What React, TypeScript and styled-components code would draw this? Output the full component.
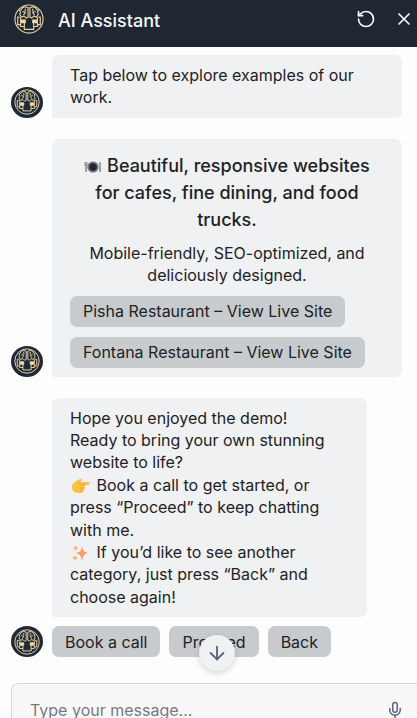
import React from "react";
import styled, { createGlobalStyle } from "styled-components";
import { ArrowDown, Mic, RotateCcw, X } from "lucide-react";

const GlobalStyle = createGlobalStyle`
  *, *::before, *::after { box-sizing: border-box; }
  body {
    margin: 0;
    background: #fdfdfd;
    color: #1e2226;
    font-family: Inter, "Liberation Sans", sans-serif;
    font-size: 16px;
    line-height: 1.4;
  }
  button, input { font: inherit; color: inherit; }
`;

const Chat = styled.main`
  display: flex;
  flex-direction: column;
  height: 100vh;
  overflow: hidden;
`;

const Header = styled.header`
  display: flex;
  align-items: center;
  flex-shrink: 0;
  gap: 14px;
  height: 47px;
  padding: 0 3px 9px 14px;
  background: #1e2732;
  color: #f7f8f9;
`;

const Title = styled.h1`
  flex: 1;
  margin: 0;
  padding-top: 4px;
  font-size: 18px;
  font-weight: 500;
  line-height: 28px;
`;

const HeaderActions = styled.div`
  display: flex;
  gap: 18px;
`;

const IconButton = styled.button`
  display: flex;
  padding: 0;
  border: 0;
  background: none;
  cursor: pointer;
`;

const Messages = styled.section`
  display: flex;
  flex-direction: column;
  flex-shrink: 0;
  gap: 21px;
  padding: 8px 15px 26px 11px;
`;

const Turn = styled.div`
  display: flex;
  flex-direction: column;
  gap: 9px;
`;

const Row = styled.div`
  display: flex;
  align-items: flex-end;
  gap: 9px;
`;

const Avatar = styled.span<{ $hidden?: boolean }>`
  display: flex;
  align-items: center;
  justify-content: center;
  flex: 0 0 32px;
  height: 31px;
  border-radius: 50%;
  background: #1e2a38;
  visibility: ${(p) => (p.$hidden ? "hidden" : "visible")};
`;

const Bubble = styled.div<{ $narrow?: boolean }>`
  flex: 1;
  margin-right: ${(p) => (p.$narrow ? "35px" : "0")};
  padding: 9px 18px;
  border-radius: 7px 7px 7px 2px;
  background: #eff1f3;
`;

const Text = styled.p`
  margin: 0;
`;

const Card = styled.article`
  display: flex;
  flex-direction: column;
  gap: 9px;
  padding-top: 4px;
`;

const CardTitle = styled.h2`
  margin: 0;
  font-size: 18px;
  font-weight: 500;
  line-height: 27px;
  text-align: center;
`;

const CardText = styled.p`
  margin: 0;
  text-align: center;
`;

const Choices = styled.div<{ $stacked?: boolean }>`
  display: flex;
  flex-direction: ${(p) => (p.$stacked ? "column" : "row")};
  align-items: flex-start;
  gap: ${(p) => (p.$stacked ? "10px" : "9px")};
`;

const Choice = styled.button`
  height: 31px;
  padding: 0 13px;
  border: 0;
  border-radius: 7px;
  background: #c7cbce;
  line-height: 22px;
  cursor: pointer;
`;

const Emoji = styled.svg<{ $tight?: boolean }>`
  width: 18px;
  height: 18px;
  margin: ${(p) => (p.$tight ? "0" : "0 2px")};
  vertical-align: -4px;
`;

const Composer = styled.form`
  display: flex;
  align-items: center;
  flex-shrink: 0;
  height: 54px;
  margin-left: 11px;
  padding: 0 13px 0 18px;
  border: 1px solid #d5d7da;
  border-right: 0;
  border-radius: 7px 0 0 7px;
  background: #f8f8f8;
  color: #636579;
`;

const MessageInput = styled.input`
  flex: 1;
  min-width: 0;
  padding: 0;
  border: 0;
  outline: 0;
  background: none;
  &::placeholder { color: #777b84; opacity: 1; }
`;

const ScrollButton = styled.button`
  position: absolute;
  bottom: 47px;
  left: calc(50% + 8px);
  display: flex;
  align-items: center;
  justify-content: center;
  width: 36px;
  height: 36px;
  padding: 0;
  transform: translateX(-50%);
  border: 0;
  border-radius: 50%;
  background: #eff1f3;
  color: #5f6079;
  box-shadow: 0 2px 6px rgba(0, 0, 0, 0.16);
  cursor: pointer;
`;

const Logo = ({ size }: { size: number }) => (
  <svg width={size} height={size} viewBox="0 0 32 32" fill="none" stroke="#ead3a2" strokeWidth="1.2" aria-hidden="true">
    <circle cx="16" cy="16" r="15" />
    <path d="M15 4v10l-2 1-2-2-3 1-2-3 1-2-1-2 2-1 1-2 3-1zM17 4v10l2 1 2-2 3 1 2-3-1-2 1-2-2-1-1-2-3-1z" />
    <path d="M9 8l3 1-2 3M23 8l-3 1 2 3M12 5v3M20 5v3" />
    <path d="M6 14H4v8h3v2h4v3h10v-3h4v-2h3v-8h-2M7 14v8M25 14v8M11 19v5M21 19v5" />
    <path d="M8 17h4v3H8zM20 17h4v3h-4z" fill="#ffe2a7" />
  </svg>
);

const PlateEmoji = () => (
  <Emoji $tight viewBox="0 0 18 18" role="img" aria-label="Plate with cutlery">
    <circle cx="9" cy="9" r="5.6" fill="#59616b" />
    <circle cx="9" cy="9" r="4.4" fill="#24282f" stroke="#a4acb4" strokeWidth=".7" />
    <path d="M1 4v4h2V4M2 4v5" fill="none" stroke="#72777c" strokeWidth=".8" />
    <path d="M2 9v5" stroke="#b94f38" strokeWidth="1.2" />
    <path d="M16 4v5" stroke="#5d91bb" strokeWidth="1.4" />
    <path d="M16 9v5" stroke="#b94f38" strokeWidth="1.2" />
  </Emoji>
);

const HandEmoji = () => (
  <Emoji viewBox="0 0 18 18" role="img" aria-label="Pointing right">
    <path d="M0 8l4-4 4-2c2-1 3 1 1 2L8 5h8c2 0 2 3 0 3h-4c1 1 1 2 0 3 1 1 0 3-1 3 0 2-2 2-4 2-4 0-7-2-7-5z" fill="#ffc145" />
    <path d="M9 8h4M8 11h4M8 14h3M8 5L6 7" fill="none" stroke="#ef9b35" strokeWidth=".9" strokeLinecap="round" />
  </Emoji>
);

const SparklesEmoji = () => (
  <Emoji viewBox="0 0 18 18" role="img" aria-label="Sparkles">
    <path d="M10 2c1 5 2 6 6 7-4 1-5 3-6 8-1-5-2-7-6-8 4-1 5-2 6-7z" fill="#fa9d68" />
    <path d="M3.5 1l1 2 2 1-2 1-1 2-1-2-2-1 2-1zM3 11l1 2 2 1-2 1-1 2-1-2-2-1 2-1z" fill="#ffb66e" />
  </Emoji>
);

const sites = ["Pisha Restaurant – View Live Site", "Fontana Restaurant – View Live Site"];
const replies = ["Book a call", "Proceed", "Back"];

export default function App() {
  return (
    <>
      <GlobalStyle />
      <Chat>
        <Header>
          <Logo size={30} />
          <Title>AI Assistant</Title>
          <HeaderActions>
            <IconButton type="button" aria-label="Restart conversation"><RotateCcw size={20} /></IconButton>
            <IconButton type="button" aria-label="Close"><X size={20} /></IconButton>
          </HeaderActions>
        </Header>
        <Messages>
          <Row>
            <Avatar><Logo size={26} /></Avatar>
            <Bubble><Text>Tap below to explore examples of our work.</Text></Bubble>
          </Row>
          <Row>
            <Avatar><Logo size={26} /></Avatar>
            <Bubble>
              <Card>
                <CardTitle><PlateEmoji /> Beautiful, responsive websites for cafes, fine dining, and food trucks.</CardTitle>
                <CardText>Mobile-friendly, SEO-optimized, and deliciously designed.</CardText>
                <Choices $stacked>
                  {sites.map((site) => <Choice type="button" key={site}>{site}</Choice>)}
                </Choices>
              </Card>
            </Bubble>
          </Row>
          <Turn>
            <Row>
              <Avatar $hidden />
              <Bubble $narrow>
                <Text>Hope you enjoyed the demo!</Text>
                <Text>Ready to bring your own stunning website to life?</Text>
                <Text><HandEmoji /> Book a call to get started, or press “Proceed” to keep chatting with me.</Text>
                <Text><SparklesEmoji /> If you’d like to see another category, just press “Back” and choose again!</Text>
              </Bubble>
            </Row>
            <Row>
              <Avatar><Logo size={26} /></Avatar>
              <Choices>
                {replies.map((reply) => <Choice type="button" key={reply}>{reply}</Choice>)}
              </Choices>
            </Row>
          </Turn>
        </Messages>
        <Composer>
          <MessageInput type="text" aria-label="Message" placeholder="Type your message..." />
          <IconButton type="button" aria-label="Record voice message"><Mic size={18} /></IconButton>
        </Composer>
        <ScrollButton type="button" aria-label="Scroll to latest message"><ArrowDown size={22} /></ScrollButton>
      </Chat>
    </>
  );
}
